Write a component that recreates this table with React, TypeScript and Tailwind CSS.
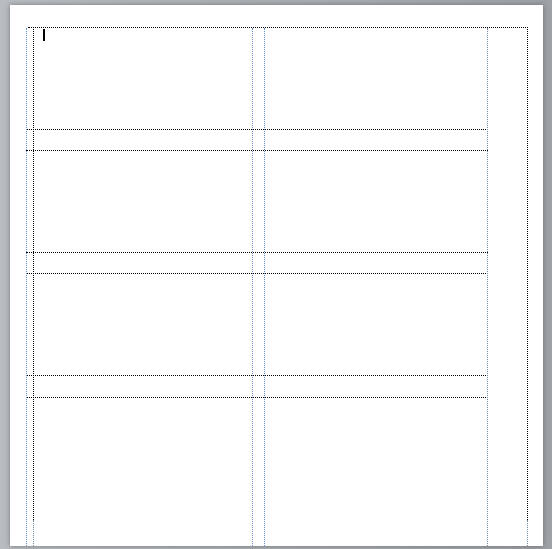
import React from 'react';

// Table row heights (px), top to bottom; last row runs past the page edge
const rows = [102, 21, 102, 21, 102, 22];

// Vertical guides: page-relative x, colour, start/end y
type Guide = { left: string; color: string; top: string; bottom: string };

const guides: Guide[] = [
  { left: 'left-[16px]', color: 'border-[#5f8fd0]', top: 'top-[23px]', bottom: 'bottom-0' },
  { left: 'left-[242px]', color: 'border-[#5f8fd0]', top: 'top-[23px]', bottom: 'bottom-0' },
  { left: 'left-[254px]', color: 'border-[#5f8fd0]', top: 'top-[23px]', bottom: 'bottom-0' },
  { left: 'left-[477px]', color: 'border-[#7686a0]', top: 'top-[23px]', bottom: 'bottom-0' },
  { left: 'left-[23px]', color: 'border-black', top: 'top-[22px]', bottom: 'bottom-[26px]' },
  { left: 'left-[517px]', color: 'border-black', top: 'top-[22px]', bottom: 'bottom-[26px]' },
  { left: 'left-[23px]', color: 'border-[#7686a0]', top: 'top-[515px]', bottom: 'bottom-0' },
  { left: 'left-[517px]', color: 'border-[#7686a0]', top: 'top-[515px]', bottom: 'bottom-0' },
];

export default function App() {
  return (
    <div className="w-[552px] h-[549px] overflow-hidden bg-gradient-to-r from-[#b9bdc1] via-[#abafb4] to-[#9ea2a7] pt-[5px] pl-[10px]">
      <div className="relative w-[533px] h-[541px] bg-white shadow-[0_0_5px_rgba(60,64,70,0.55)] overflow-hidden">
        {/* page / table frame top */}
        <div className="pt-[22px] pl-[18px]">
          <div className="w-[500px] border-t border-dotted border-black" />
        </div>

        {/* table rows */}
        <div className="ml-[16px] w-[462px] flex flex-col">
          {rows.map((h, i) => (
            <div
              key={i}
              style={{ height: h }}
              className="border-b border-dotted border-black box-border"
            />
          ))}
        </div>

        {/* vertical guides over the page */}
        {guides.map((g, i) => (
          <div
            key={i}
            className={`absolute border-l border-dotted ${g.left} ${g.color} ${g.top} ${g.bottom}`}
          />
        ))}

        {/* text cursor */}
        <div className="absolute left-[33px] top-[24px] w-[2px] h-[12px] bg-black" />
      </div>
    </div>
  );
}
